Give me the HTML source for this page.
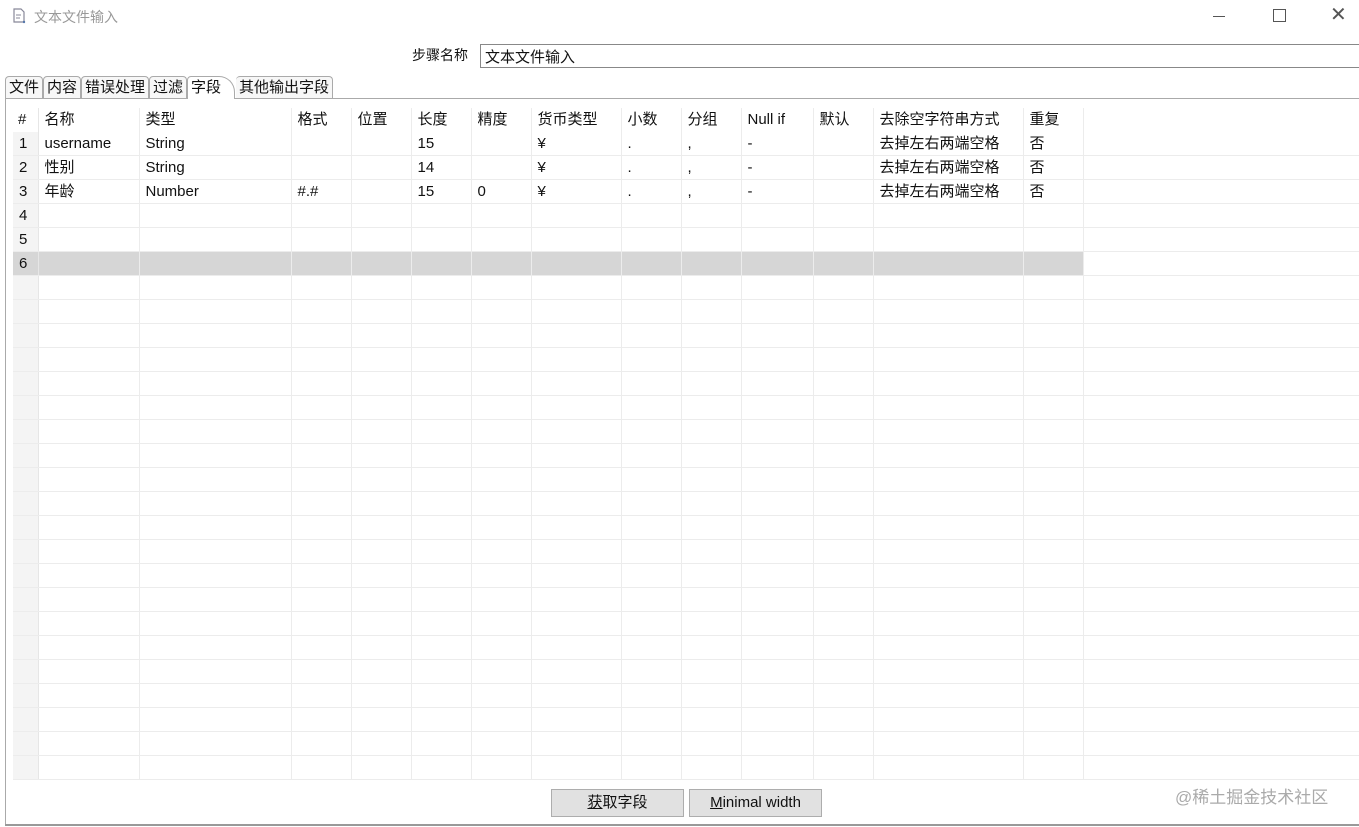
<!DOCTYPE html>
<html><head><meta charset="utf-8"><style>
body{margin:0;width:1359px;height:827px;background:#fff;font-family:"Liberation Sans","Noto Sans CJK SC",sans-serif;font-size:15px;color:#111;position:relative;overflow:hidden}
.a{position:absolute}
.tab{position:absolute;top:76px;height:21px;border:1px solid #aaa;border-bottom:none;border-radius:4px 4px 0 0;padding:0 3px;line-height:22px;background:#f7f7f7}
table{position:absolute;left:13px;top:108px;border-collapse:collapse;table-layout:fixed}
td{height:23px;padding:0 0 0 6px;border-right:1px solid #ececec;border-bottom:1px solid #ececec;white-space:nowrap;overflow:hidden;line-height:23px}
tr.h td{border-bottom:none;height:24px;line-height:22px}
td.n{background:#f4f4f4;border-right:1px solid #e6e6e6;padding-left:6px}
tr.s td{background:#d6d6d6}
td.f{border-right:none}
.btn{position:absolute;top:789px;height:26px;border:1px solid #adadad;background:#e1e1e1;text-align:center;line-height:26px}
</style></head><body>
<svg class="a" style="left:12px;top:8px" width="16" height="16" viewBox="0 0 16 16"><path d="M2 1h7l3 3v10H2z" fill="none" stroke="#889" stroke-width="1.2"/><path d="M4 7h5M4 10h4" stroke="#889"/><circle cx="12" cy="14" r="1.2" fill="#57a"/></svg>
<div class="a" style="left:34px;top:7px;color:#999;font-size:14px">文本文件输入</div>
<div class="a" style="left:1213px;top:16px;width:12px;height:1px;background:#555"></div>
<div class="a" style="left:1273px;top:9px;width:11px;height:11px;border:1px solid #555"></div>
<div class="a" style="left:1330px;top:2px;font-size:20px;color:#555">✕</div>
<div class="a" style="left:412px;top:45px;font-size:14px">步骤名称</div>
<div class="a" style="left:480px;top:44px;width:880px;height:24px;border:1px solid #888;line-height:25px;padding-left:4px;box-sizing:border-box">文本文件输入</div>
<div class="a" style="left:5px;top:98px;width:1354px;height:1px;background:#aaa"></div>
<div class="a" style="left:5px;top:98px;width:1px;height:727px;background:#aaa"></div>
<div class="a" style="left:5px;top:824px;width:1354px;height:2px;background:#999"></div>
<div class="tab" style="left:5px">文件</div>
<div class="tab" style="left:43px">内容</div>
<div class="tab" style="left:81px">错误处理</div>
<div class="tab" style="left:149px">过滤</div>
<div class="tab" style="left:187px;background:#fff;height:22px;width:40px;border-radius:4px 16px 0 0">字段</div>
<div class="tab" style="left:236px;border-left:none">其他输出字段</div>
<table>
<colgroup><col style="width:25px"><col style="width:101px"><col style="width:152px"><col style="width:60px"><col style="width:60px"><col style="width:60px"><col style="width:60px"><col style="width:90px"><col style="width:60px"><col style="width:60px"><col style="width:72px"><col style="width:60px"><col style="width:150px"><col style="width:60px"><col style="width:276px"></colgroup>
<tr class="h"><td class="n" style="background:#fff;padding-left:5px">#</td><td>名称</td><td>类型</td><td>格式</td><td>位置</td><td>长度</td><td>精度</td><td>货币类型</td><td>小数</td><td>分组</td><td>Null if</td><td>默认</td><td>去除空字符串方式</td><td>重复</td><td class="f"></td></tr>
<tr><td class="n">1</td><td>username</td><td>String</td><td></td><td></td><td>15</td><td></td><td>¥</td><td>.</td><td>,</td><td>-</td><td></td><td>去掉左右两端空格</td><td>否</td><td class="f"></td></tr>
<tr><td class="n">2</td><td>性别</td><td>String</td><td></td><td></td><td>14</td><td></td><td>¥</td><td>.</td><td>,</td><td>-</td><td></td><td>去掉左右两端空格</td><td>否</td><td class="f"></td></tr>
<tr><td class="n">3</td><td>年龄</td><td>Number</td><td>#.#</td><td></td><td>15</td><td>0</td><td>¥</td><td>.</td><td>,</td><td>-</td><td></td><td>去掉左右两端空格</td><td>否</td><td class="f"></td></tr>
<tr><td class="n">4</td><td></td><td></td><td></td><td></td><td></td><td></td><td></td><td></td><td></td><td></td><td></td><td></td><td></td><td class="f"></td></tr>
<tr><td class="n">5</td><td></td><td></td><td></td><td></td><td></td><td></td><td></td><td></td><td></td><td></td><td></td><td></td><td></td><td class="f"></td></tr>
<tr class="s"><td class="n" style="background:#d6d6d6">6</td><td></td><td></td><td></td><td></td><td></td><td></td><td></td><td></td><td></td><td></td><td></td><td></td><td></td><td class="f" style="background:#fff"></td></tr>
<tr><td class="n"></td><td></td><td></td><td></td><td></td><td></td><td></td><td></td><td></td><td></td><td></td><td></td><td></td><td></td><td class="f"></td></tr>
<tr><td class="n"></td><td></td><td></td><td></td><td></td><td></td><td></td><td></td><td></td><td></td><td></td><td></td><td></td><td></td><td class="f"></td></tr>
<tr><td class="n"></td><td></td><td></td><td></td><td></td><td></td><td></td><td></td><td></td><td></td><td></td><td></td><td></td><td></td><td class="f"></td></tr>
<tr><td class="n"></td><td></td><td></td><td></td><td></td><td></td><td></td><td></td><td></td><td></td><td></td><td></td><td></td><td></td><td class="f"></td></tr>
<tr><td class="n"></td><td></td><td></td><td></td><td></td><td></td><td></td><td></td><td></td><td></td><td></td><td></td><td></td><td></td><td class="f"></td></tr>
<tr><td class="n"></td><td></td><td></td><td></td><td></td><td></td><td></td><td></td><td></td><td></td><td></td><td></td><td></td><td></td><td class="f"></td></tr>
<tr><td class="n"></td><td></td><td></td><td></td><td></td><td></td><td></td><td></td><td></td><td></td><td></td><td></td><td></td><td></td><td class="f"></td></tr>
<tr><td class="n"></td><td></td><td></td><td></td><td></td><td></td><td></td><td></td><td></td><td></td><td></td><td></td><td></td><td></td><td class="f"></td></tr>
<tr><td class="n"></td><td></td><td></td><td></td><td></td><td></td><td></td><td></td><td></td><td></td><td></td><td></td><td></td><td></td><td class="f"></td></tr>
<tr><td class="n"></td><td></td><td></td><td></td><td></td><td></td><td></td><td></td><td></td><td></td><td></td><td></td><td></td><td></td><td class="f"></td></tr>
<tr><td class="n"></td><td></td><td></td><td></td><td></td><td></td><td></td><td></td><td></td><td></td><td></td><td></td><td></td><td></td><td class="f"></td></tr>
<tr><td class="n"></td><td></td><td></td><td></td><td></td><td></td><td></td><td></td><td></td><td></td><td></td><td></td><td></td><td></td><td class="f"></td></tr>
<tr><td class="n"></td><td></td><td></td><td></td><td></td><td></td><td></td><td></td><td></td><td></td><td></td><td></td><td></td><td></td><td class="f"></td></tr>
<tr><td class="n"></td><td></td><td></td><td></td><td></td><td></td><td></td><td></td><td></td><td></td><td></td><td></td><td></td><td></td><td class="f"></td></tr>
<tr><td class="n"></td><td></td><td></td><td></td><td></td><td></td><td></td><td></td><td></td><td></td><td></td><td></td><td></td><td></td><td class="f"></td></tr>
<tr><td class="n"></td><td></td><td></td><td></td><td></td><td></td><td></td><td></td><td></td><td></td><td></td><td></td><td></td><td></td><td class="f"></td></tr>
<tr><td class="n"></td><td></td><td></td><td></td><td></td><td></td><td></td><td></td><td></td><td></td><td></td><td></td><td></td><td></td><td class="f"></td></tr>
<tr><td class="n"></td><td></td><td></td><td></td><td></td><td></td><td></td><td></td><td></td><td></td><td></td><td></td><td></td><td></td><td class="f"></td></tr>
<tr><td class="n"></td><td></td><td></td><td></td><td></td><td></td><td></td><td></td><td></td><td></td><td></td><td></td><td></td><td></td><td class="f"></td></tr>
<tr><td class="n"></td><td></td><td></td><td></td><td></td><td></td><td></td><td></td><td></td><td></td><td></td><td></td><td></td><td></td><td class="f"></td></tr>
<tr><td class="n"></td><td></td><td></td><td></td><td></td><td></td><td></td><td></td><td></td><td></td><td></td><td></td><td></td><td></td><td class="f"></td></tr>
</table>
<div class="a" style="left:6px;top:783px;width:1353px;height:40px;background:#fff"></div>
<div class="btn" style="left:551px;width:131px"><u>获</u>取字段</div>
<div class="btn" style="left:689px;width:131px"><u>M</u>inimal width</div>
<div class="a" style="left:1175px;top:783px;font-size:17px;color:#aaa">@稀土掘金技术社区</div>
</body></html>
